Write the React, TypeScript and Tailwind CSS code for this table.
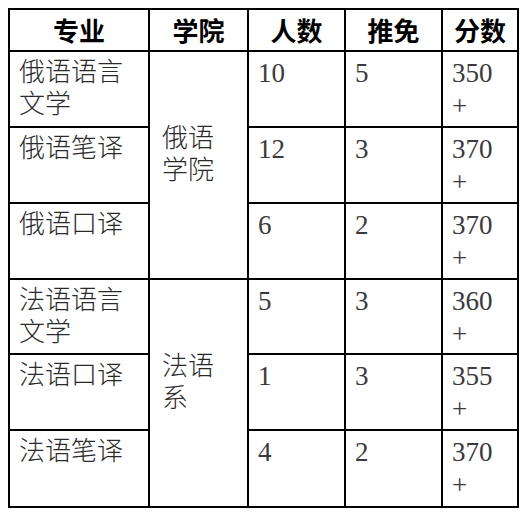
const rows = [
  { major: "俄语语言文学", count: "10", rec: "5", score: "350" },
  { major: "俄语笔译", count: "12", rec: "3", score: "370" },
  { major: "俄语口译", count: "6", rec: "2", score: "370" },
  { major: "法语语言文学", count: "5", rec: "3", score: "360" },
  { major: "法语口译", count: "1", rec: "3", score: "355" },
  { major: "法语笔译", count: "4", rec: "2", score: "370" },
];

const heights = ["h-[76px]", "h-[76px]", "h-[76px]", "h-[75px]", "h-[76px]", "h-[77px]"];

const cell = "border-2 border-black align-top pl-[9px] pt-[5px]";
const num = "text-[27px] font-normal text-[#3a3a3a]";

export default function App() {
  return (
    <div className="w-[528px] h-[517px] bg-white pt-[8px] pl-[8px] font-['Liberation_Serif','Noto_Sans_CJK_SC',serif] text-[26px] leading-[32px] text-[#2a2a2a]">
      <table className="table-fixed border-collapse w-[509px]">
        <colgroup>
          <col className="w-[140px]" />
          <col className="w-[99px]" />
          <col className="w-[97px]" />
          <col className="w-[97px]" />
          <col className="w-[76px]" />
        </colgroup>
        <thead>
          <tr className="h-[42px] font-['Noto_Sans_CJK_SC',sans-serif] font-bold text-black">
            <th className="border-2 border-black">专业</th>
            <th className="border-2 border-black">学院</th>
            <th className="border-2 border-black">人数</th>
            <th className="border-2 border-black">推免</th>
            <th className="border-2 border-black">分数</th>
          </tr>
        </thead>
        <tbody className="font-light">
          {rows.map((r, i) => (
            <tr key={i} className={heights[i]}>
              <td className={cell}>{r.major}</td>
              {i % 3 === 0 && (
                <td rowSpan={3} className="border-2 border-black align-middle pl-[12px] pb-[20px]">
                  {i === 0 ? (
                    <>
                      俄语
                      <br />
                      学院
                    </>
                  ) : (
                    <>
                      法语
                      <br />系
                    </>
                  )}
                </td>
              )}
              <td className={cell}>
                <span className={num}>{r.count}</span>
              </td>
              <td className={cell}>
                <span className={num}>{r.rec}</span>
              </td>
              <td className={cell}>
                <span className={num}>
                  {r.score}
                  <br />+
                </span>
              </td>
            </tr>
          ))}
        </tbody>
      </table>
    </div>
  );
}
